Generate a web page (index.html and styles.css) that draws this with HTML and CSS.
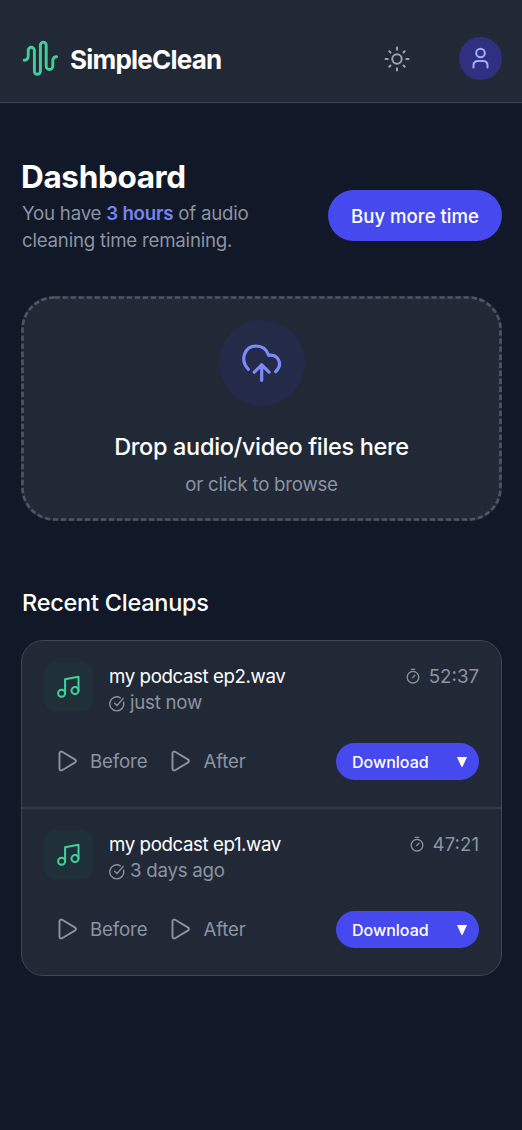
FILE: index.html
```html
<!DOCTYPE html>
<html lang="en">
<head>
<meta charset="utf-8">
<title>SimpleClean</title>
<link rel="stylesheet" href="styles.css">
</head>
<body>
<svg class="defs" width="0" height="0" aria-hidden="true">
  <symbol id="note" viewBox="0 0 24 24"><circle cx="4.600" cy="18.200" r="3.500"/><circle cx="18" cy="15.600" r="3.500"/><path d="M8.100 18.200V4.200L21.500 1.700v14"/></symbol>
  <symbol id="done" viewBox="0 0 16 16"><path d="M14.600 6.200A7 7 0 1 1 11.300 1.800M5.600 7.200L8 9.600l6.200-7.200"/></symbol>
  <symbol id="play" viewBox="0 0 20 22"><path d="M1.500 3.200C1.500 1.800 2.800 1.200 4.100 1.800l12.700 7.600c1.600 1 1.600 2.200 0 3.200L4.100 20.200c-1.300.600-2.600 0-2.600-1.400z"/></symbol>
  <symbol id="timer" viewBox="0 0 14 16"><circle cx="7" cy="9.200" r="5.800"/><path d="M5.300 1.300h3.400M6.600 9.600l2.300-2.300"/></symbol>
</svg>
<header class="topbar">
  <a class="brand">
    <svg class="logo" viewBox="0 0 37 37"><path d="M2.200 20.300C4.800 20.300 6.200 18.600 6.200 15.800V10.400a3.100 3.100 0 0 1 6.200 0V31.300a3 3 0 0 0 6 0V5.200a2.900 2.900 0 0 1 5.800 0V26.200a3.300 3.300 0 0 0 6.600 0V21C30.800 18 32.100 16.800 34.600 16.800"/></svg>
    <span class="brand-name">SimpleClean</span>
  </a>
  <div class="actions">
    <svg class="sun" viewBox="-14 -14 28 28"><circle r="4.700"/><path d="M0-11.500V-9.300M0 9.300v2.200M-11.500 0h2.200M9.300 0h2.200M-7.700-7.700l1.200 1.200M6.500 6.500l1.200 1.200M-7.700 7.700l1.200-1.200M6.500-6.500l1.200-1.200"/></svg>
    <span class="avatar"><svg viewBox="0 0 22 24"><circle cx="10.500" cy="6" r="4.300"/><path d="M3.500 20.600v-2c0-3 1.800-4.500 4.500-4.500h5c2.700 0 4.500 1.500 4.500 4.500v2"/></svg></span>
  </div>
</header>
<main class="page">
  <section class="intro">
    <div>
      <h1 class="title">Dashboard</h1>
      <p class="balance">You have <strong class="hours">3 hours</strong> of audio<br>cleaning time remaining.</p>
    </div>
    <button class="buy">Buy more time</button>
  </section>
  <section class="drop">
    <svg class="drop-edge" viewBox="0 0 481 225"><rect x="1.500" y="1.500" width="478" height="222" rx="32"/></svg>
    <span class="drop-icon"><svg viewBox="0 0 42 42"><path d="M7.300 27.300C-1.500 17.500 3.600 4 15.300 4c5.600 0 10.300 3.400 12.400 9.300C37.500 12.400 42.400 22.200 34.700 29.700M20.700 38.300V22.700M13.300 30.200l7.400-7.400 7.400 7.400"/></svg></span>
    <h2 class="drop-title">Drop audio/video files here</h2>
    <p class="drop-hint">or click to browse</p>
  </section>
  <h2 class="section-title">Recent Cleanups</h2>
  <ul class="list">
    <li class="item">
      <div class="item-head">
        <span class="tile"><svg><use href="#note"/></svg></span>
        <div class="info">
          <div class="name">my podcast ep2.wav</div>
          <div class="when"><svg class="done"><use href="#done"/></svg><span class="ago">just now</span></div>
        </div>
        <div class="length"><svg class="timer"><use href="#timer"/></svg><span class="time">52:37</span></div>
      </div>
      <div class="item-foot">
        <span class="listen"><svg class="play"><use href="#play"/></svg><span class="label">Before</span></span>
        <span class="listen"><svg class="play"><use href="#play"/></svg><span class="label">After</span></span>
        <button class="download"><span class="dl-text">Download</span><svg class="caret" viewBox="0 0 10 10"><path d="M0 0h10L5.700 9.500q-.7.900-1.400 0z"/></svg></button>
      </div>
    </li>
    <li class="item">
      <div class="item-head">
        <span class="tile"><svg><use href="#note"/></svg></span>
        <div class="info">
          <div class="name">my podcast ep1.wav</div>
          <div class="when"><svg class="done"><use href="#done"/></svg><span class="ago">3 days ago</span></div>
        </div>
        <div class="length"><svg class="timer"><use href="#timer"/></svg><span class="time">47:21</span></div>
      </div>
      <div class="item-foot">
        <span class="listen"><svg class="play"><use href="#play"/></svg><span class="label">Before</span></span>
        <span class="listen"><svg class="play"><use href="#play"/></svg><span class="label">After</span></span>
        <button class="download"><span class="dl-text">Download</span><svg class="caret" viewBox="0 0 10 10"><path d="M0 0h10L5.700 9.500q-.7.900-1.400 0z"/></svg></button>
      </div>
    </li>
  </ul>
</main>
</body>
</html>
```
FILE: styles.css
```css
* { box-sizing: border-box; }
body {
  margin: 0;
  min-height: 1130px;
  background: #111827;
  color: #fff;
  font-family: Inter, "Liberation Sans", sans-serif;
  font-size: 18.7px;
  line-height: 26.7px;
}
h1, h2, p, ul { margin: 0; padding: 0; }
button { border: 0; background: #4549ee; color: #fff; font-family: inherit; font-weight: 500; white-space: nowrap; }
svg { display: block; flex: none; fill: none; stroke: currentColor; stroke-linecap: round; stroke-linejoin: round; }
.defs { position: absolute; }

.topbar {
  display: flex;
  justify-content: space-between;
  height: 103px;
  padding: 37px 20px 0 22px;
  background: #212936;
  border-bottom: 1px solid #3b4553;
}
.brand { display: flex; align-items: center; height: 43px; gap: 11px; }
.logo { width: 37px; height: 37px; color: #3fd09a; stroke-width: 2.9; }
.brand-name { font-size: 26px; font-weight: 700; letter-spacing: -.78px; line-height: 36px; padding-top: 2px; }
.actions { display: flex; align-items: center; height: 43px; gap: 48px; }
.sun { width: 28px; height: 28px; color: #9ca3af; stroke-width: 2; }
.avatar { display: grid; place-items: center; width: 43px; height: 43px; border-radius: 50%; background: #2f3180; color: #a0aefb; }
.avatar svg { width: 22px; height: 24px; stroke-width: 2; }

.page { padding: 55px 20px 0 21px; }
.intro { display: flex; justify-content: space-between; height: 138px; }
.title { font-size: 31.5px; font-weight: 700; line-height: 36px; letter-spacing: -.35px; padding: 1px 0 6px 0; }
.balance { color: #8b93a1; padding-left: 1px; letter-spacing: -.23px; white-space: nowrap; }
.hours { color: #7484f5; font-weight: 600; }
.buy { width: 174px; height: 51px; margin-top: 32px; padding: 1px 0 0; border-radius: 26px; font-size: 18.6px; }

.drop { position: relative; display: flex; flex-direction: column; align-items: center; height: 225px; padding-top: 24px; border-radius: 33px; background: #212936; }
.drop-edge { position: absolute; inset: 0; width: 481px; height: 225px; color: #4b5563; stroke-width: 2.7; stroke-dasharray: 5.35 2.67; stroke-linecap: butt; }
.drop-icon { display: grid; place-items: center; width: 86px; height: 86px; border-radius: 50%; background: #232b49; color: #7c8bfa; }
.drop-icon svg { width: 42px; height: 42px; stroke-width: 3.2; }
.drop-title { margin-top: 25px; font-size: 23.5px; font-weight: 500; letter-spacing: -.33px; line-height: 32px; white-space: nowrap; }
.drop-hint { margin-top: 9px; color: #8b93a1; letter-spacing: -.25px; }

.section-title { margin-top: 66px; padding-left: 1px; font-size: 23.5px; font-weight: 500; letter-spacing: -.25px; line-height: 32px; }
.list { height: 336px; margin-top: 21px; list-style: none; border: 1px solid #3b4553; border-radius: 22px; background: #212936; }
.item { height: 166px; padding: 21px 22px 0; }
.item + .item { border-top: 2px solid #303b4a; }
.item-head { display: flex; height: 81px; }
.tile { display: grid; place-items: center; width: 49px; height: 49px; border-radius: 11px; background: #1f3039; color: #41d29b; }
.tile svg { width: 24px; height: 24px; stroke-width: 2; }
.info { flex: 1; margin-left: 16px; padding-top: 2px; letter-spacing: -.25px; white-space: nowrap; }
.name { letter-spacing: -.41px; }
.when { display: flex; align-items: center; gap: 5px; height: 26px; color: #8b93a1; }
.done { width: 16px; height: 16px; stroke-width: 1.4; }
.length { display: flex; align-items: center; height: 28px; gap: 9px; color: #8b93a1; }
.time { padding-top: 2px; }
.timer { width: 14px; height: 16px; stroke-width: 1.3; }
.item-foot { display: flex; align-items: center; height: 37px; padding-left: 14px; color: #8b93a1; }
.listen { display: flex; align-items: center; gap: 12px; margin-right: 24px; }
.label { padding-top: 2px; letter-spacing: -.15px; }
.play { width: 20px; height: 22px; stroke-width: 1.9; }
.download { display: flex; align-items: center; justify-content: space-between; width: 143px; height: 37px; margin-left: auto; padding: 0 12px 0 16px; border-radius: 19px; font-size: 16px; }
.caret { width: 10px; height: 10px; fill: #fff; stroke: none; }
```
